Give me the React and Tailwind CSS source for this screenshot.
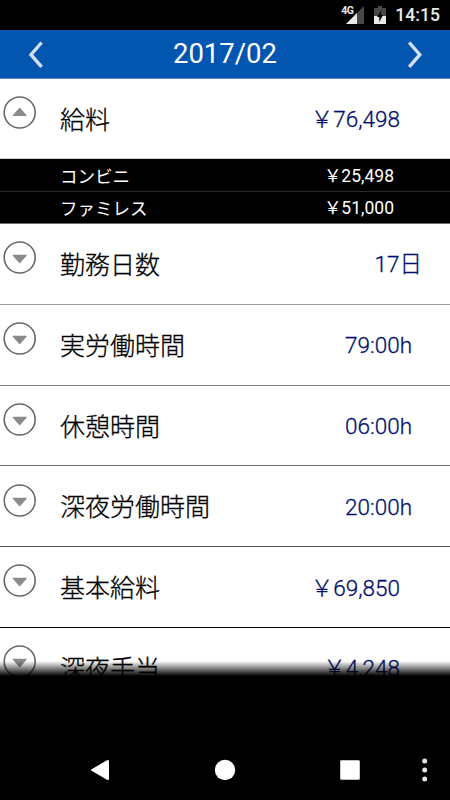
import React from "react";

const rows = [
	{
		label: "給料",
		value: "￥76,498",
		pad: "pr-[50px]",
		height: "h-[80px]",
		border: "border-[#d0d0d0]",
		children: [
			{ label: "コンビニ", value: "￥25,498", height: "h-[33px]", border: "border-[#2a2a2a]" },
			{ label: "ファミレス", value: "￥51,000", height: "h-8", border: "border-[#6a6a6a]" },
		],
	},
	{ label: "勤務日数", value: "17日", pad: "pr-[28px]", height: "h-[80.8px]", border: "border-[#a0a0a0]" },
	{ label: "実労働時間", value: "79:00h", pad: "pr-[38px]", height: "h-[80.8px]", border: "border-[#808080]" },
	{ label: "休憩時間", value: "06:00h", pad: "pr-[38px]", height: "h-[80.8px]", border: "border-[#707070]" },
	{ label: "深夜労働時間", value: "20:00h", pad: "pr-[38px]", height: "h-[80.8px]", border: "border-[#505050]" },
	{ label: "基本給料", value: "￥69,850", pad: "pr-[50px]", height: "h-[80.8px]", border: "border-black" },
	{ label: "深夜手当", value: "￥4,248", pad: "pr-[50px]", height: "h-[80.8px]", border: "border-black" },
];

const ToggleIcon = ({ open }) => (
	<svg className="w-10 h-10 shrink-0" viewBox="0 0 40 40" fill="none">
		<circle cx="19.7" cy="20.5" r="15.5" stroke="#686868" strokeWidth="1.6" />
		{open ? (
			<path d="M12.8 23.2 19.7 15.4 26.6 23.2v.9H12.8z" fill="#8a8a8a" />
		) : (
			<path d="M12.8 17.8h13.8v1L19.7 26.4 12.8 18.8z" fill="#8a8a8a" />
		)}
	</svg>
);

const Chevron = ({ left }) => (
	<svg className="w-4 h-7" viewBox="0 0 16 28" fill="none">
		<path
			d={left ? "M14.6 2.5 4 14.7 14.6 26.9" : "M2.2 2.5 12.8 14.7 2.2 26.9"}
			stroke="#d3e0f2"
			strokeWidth="3.4"
		/>
	</svg>
);

const StatusBar = () => (
	<div className="flex h-[30px] items-start justify-end bg-black pr-[10px] text-[#e9e9e9]">
		<span className="mt-[5px] text-[10.5px] leading-[11px] font-bold tracking-[-0.5px]">
			4G
		</span>
		<svg className="-ml-[7px] mt-[6px] w-[18px] h-[18px]" viewBox="0 0 18 18">
			<path d="M18 0v18H0z" fill="#484848" />
			<path d="M11 7v11H0z" fill="#e9e9e9" />
		</svg>
		<svg className="ml-[10px] mt-[6px] w-3 h-[18px]" viewBox="0 0 12 18">
			<path d="M4 0h4v2h4v8H0V2h4z" fill="#484848" />
			<path d="M0 10h12v8H0z" fill="#e9e9e9" />
			<path d="M7.5 4 3 11h2.3v5L9 9H6.7z" fill="#000" />
		</svg>
		<span className="ml-[9px] mt-[5px] text-[17.6px] leading-[21px] font-medium">
			14:15
		</span>
	</div>
);

const SubRow = ({ row }) => (
	<div
		className={`flex items-center justify-between border-b bg-black pl-[60px] pr-14 text-[17.5px] text-white ${row.height} ${row.border}`}
	>
		<span className="mt-1">{row.label}</span>
		<span className="mt-0.5">{row.value}</span>
	</div>
);

const Row = ({ row }) => (
	<div>
		<div className={`flex items-start border-b bg-white ${row.height} ${row.border}`}>
			<div className="mt-[13.3px]">
				<ToggleIcon open={!!row.children} />
			</div>
			<span className="ml-5 mt-[24px] text-[25px] leading-9 font-light text-black [-webkit-text-stroke:0.3px_black]">
				{row.label}
			</span>
			<span
				className={`ml-auto mt-[22.4px] text-[22.5px] leading-9 font-light text-[#00106c] [-webkit-text-stroke:0.3px_#00106c] ${row.pad}`}
			>
				{row.value}
			</span>
		</div>
		{row.children?.map((child) => <SubRow key={child.label} row={child} />)}
	</div>
);

const NavBar = () => (
	<div className="flex h-[60px] items-center bg-black">
		<svg className="w-full h-[60px]" viewBox="0 0 450 60" fill="#fff">
			<path d="M91.6 29.2 107 20.3Q109 19.3 109 21.5V38.5Q109 40.7 107 39.7L91.6 30.8Q90.4 30 91.6 29.2z" />
			<circle cx="225" cy="30" r="10.2" />
			<rect x="340.2" y="20.2" width="19.6" height="19.6" rx="1.3" />
			<g fill="#e4e4e4">
				<circle cx="424.7" cy="21" r="2.5" />
				<circle cx="424.7" cy="30" r="2.5" />
				<circle cx="424.7" cy="39" r="2.5" />
			</g>
		</svg>
	</div>
);

const App = () => (
	<div className="flex h-[800px] w-[450px] flex-col overflow-hidden bg-black font-['Roboto','Noto_Sans_CJK_JP',sans-serif]">
		<StatusBar />
		<div className="flex h-[49px] shrink-0 items-center justify-between border-b border-[#5a86c4] bg-[#0256b0] pl-[27px] pr-[27px]">
			<Chevron left />
			<span className="text-[27.5px] leading-8 text-white">2017/02</span>
			<Chevron />
		</div>
		<div className="relative h-[597px] shrink-0 overflow-hidden">
			{rows.map((row) => (
				<Row key={row.label} row={row} />
			))}
			{/* fading edge of the scroll area */}
			<div className="absolute inset-x-0 bottom-0 h-[15px] bg-linear-to-b from-transparent to-black" />
		</div>
		<div className="flex-1" />
		<NavBar />
	</div>
);

export default App;
